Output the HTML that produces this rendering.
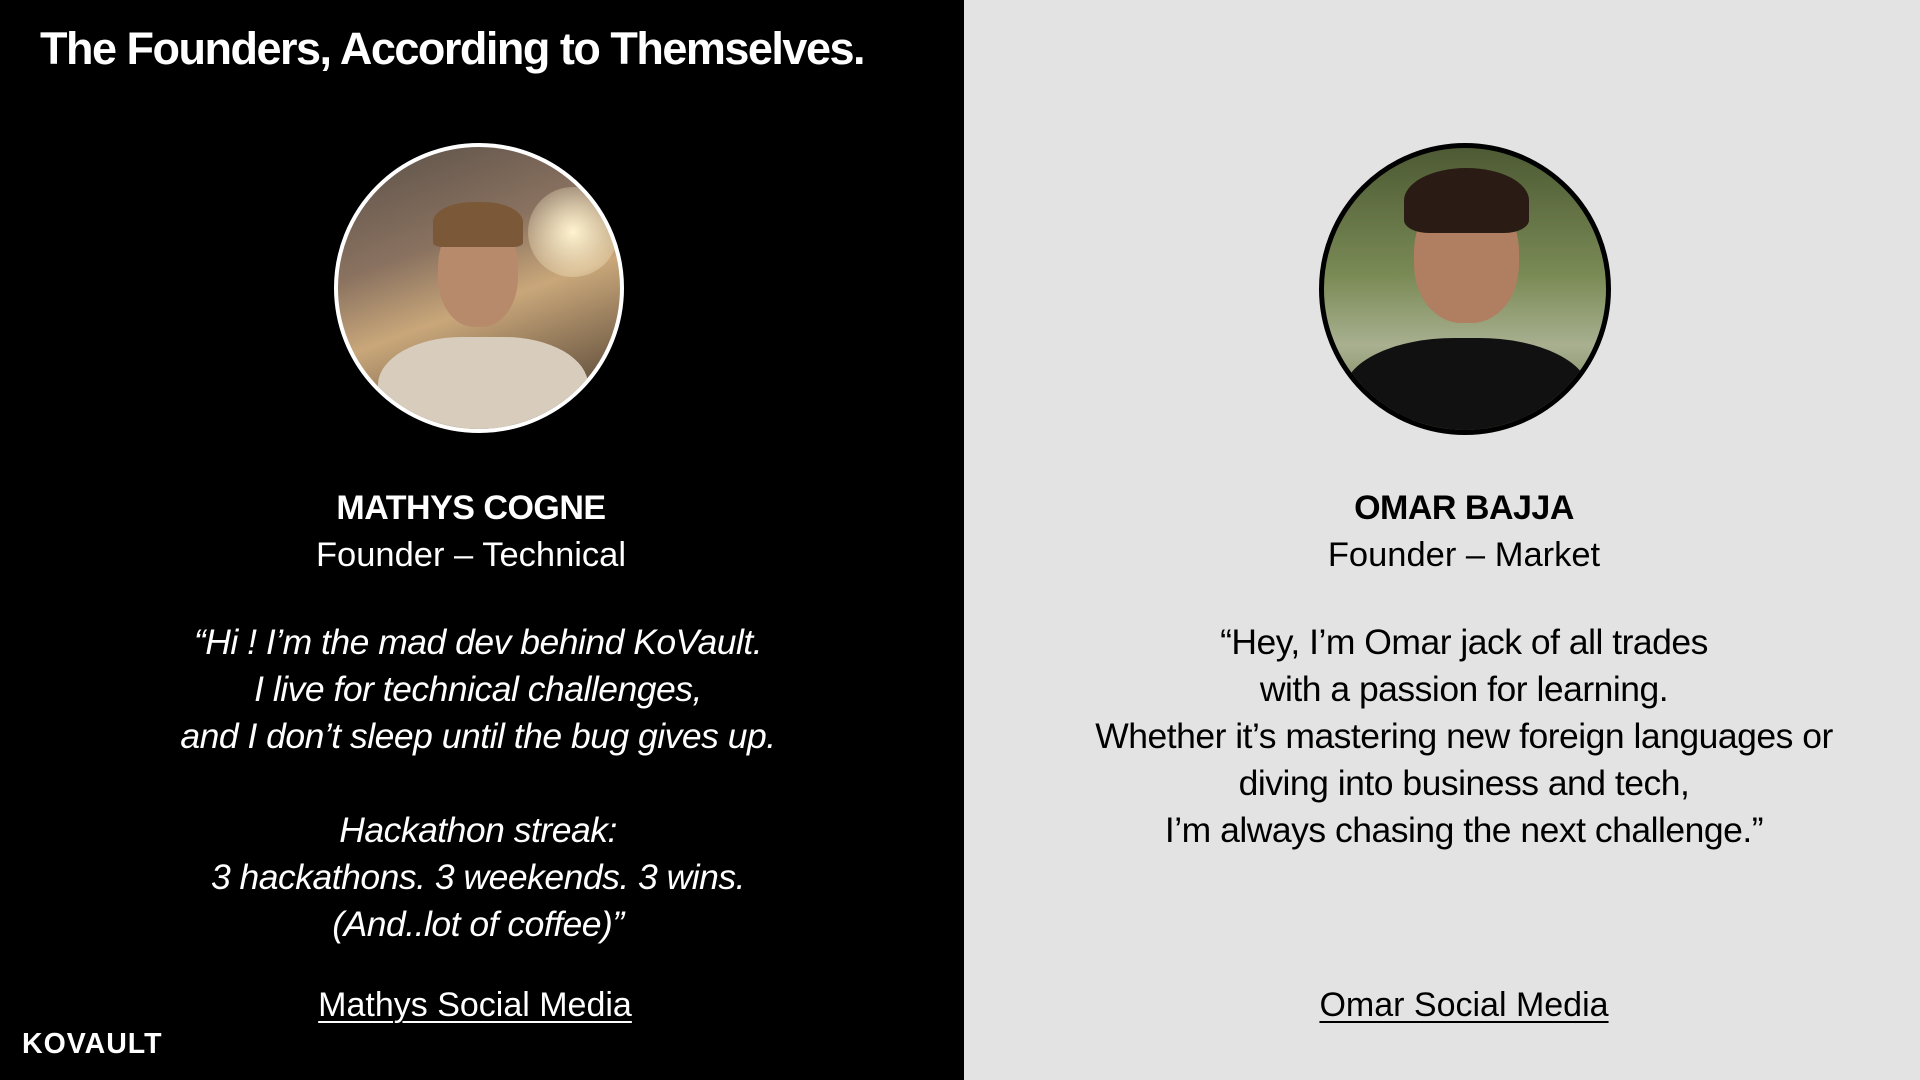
<!DOCTYPE html>
<html><head><meta charset="utf-8"><style>
html,body{margin:0;padding:0;width:1920px;height:1080px;overflow:hidden;font-family:"Liberation Sans",sans-serif}
.l{position:absolute;left:0;top:0;width:964px;height:1080px;background:#000;color:#fff}
.r{position:absolute;left:964px;top:0;width:956px;height:1080px;background:#e3e3e3;color:#000}
.t{position:absolute;left:40px;top:23px;font-size:45px;font-weight:bold;letter-spacing:-1.5px;white-space:nowrap}
.c{position:absolute;text-align:center;white-space:nowrap;transform:translateX(-50%)}
.name{font-size:34px;font-weight:bold;letter-spacing:-0.5px}
.role{font-size:34.5px}
.q{font-size:35.5px;line-height:47px;letter-spacing:-0.5px}
.lnk{font-size:34px;text-decoration:underline;text-underline-offset:5px;text-decoration-thickness:2px}
.av{position:absolute;width:282px;height:282px;border-radius:50%;overflow:hidden}
.logo{position:absolute;left:22px;top:1028px;font-size:28.5px;font-weight:bold;letter-spacing:1px}
</style></head><body>
<div class="l">
<div class="t">The Founders, According to Themselves.</div>
<div class="av" style="left:334px;top:143px;border:4px solid #fff;background:linear-gradient(160deg,#5a5048 0%,#8a7260 35%,#c9a77a 55%,#3a2e26 100%)">
<div style="position:absolute;left:190px;top:40px;width:90px;height:90px;border-radius:50%;background:radial-gradient(#fff3d0,rgba(255,220,160,0))"></div>
<div style="position:absolute;left:100px;top:70px;width:80px;height:110px;border-radius:45%;background:#b88a6c"></div>
<div style="position:absolute;left:95px;top:55px;width:90px;height:45px;border-radius:45% 45% 10% 10%;background:#7a5838"></div>
<div style="position:absolute;left:40px;top:190px;width:210px;height:120px;border-radius:40% 40% 0 0;background:#d8cdbd"></div>
</div>
<div class="c name" style="left:471px;top:489px">MATHYS COGNE</div>
<div class="c role" style="left:471px;top:536px">Founder – Technical</div>
<div class="c q" style="left:478px;top:619px;font-style:italic">“Hi ! I’m the mad dev behind KoVault.<br>I live for technical challenges,<br>and I don’t sleep until the bug gives up.<br><br>Hackathon streak:<br>3 hackathons. 3 weekends. 3 wins.<br>(And..lot of coffee)”</div>
<div class="c lnk" style="left:475px;top:986px">Mathys Social Media</div>
<div class="logo">KOVAULT</div>
</div>
<div class="r">
<div class="av" style="left:355px;top:143px;border:5px solid #000;background:linear-gradient(180deg,#4d5a34 0%,#7a8a55 45%,#a8b090 70%,#6a7648 100%)">
<div style="position:absolute;left:90px;top:45px;width:105px;height:130px;border-radius:45%;background:#b07e60"></div>
<div style="position:absolute;left:80px;top:20px;width:125px;height:65px;border-radius:50% 50% 20% 20%;background:#2a1c14"></div>
<div style="position:absolute;left:20px;top:190px;width:245px;height:120px;border-radius:45% 45% 0 0;background:#111"></div>
</div>
<div class="c name" style="left:500px;top:489px">OMAR BAJJA</div>
<div class="c role" style="left:500px;top:536px">Founder – Market</div>
<div class="c q" style="left:500px;top:619px">“Hey, I’m Omar jack of all trades<br>with a passion for learning.<br>Whether it’s mastering new foreign languages or<br>diving into business and tech,<br>I’m always chasing the next challenge.”</div>
<div class="c lnk" style="left:500px;top:986px">Omar Social Media</div>
</div>
</body></html>
